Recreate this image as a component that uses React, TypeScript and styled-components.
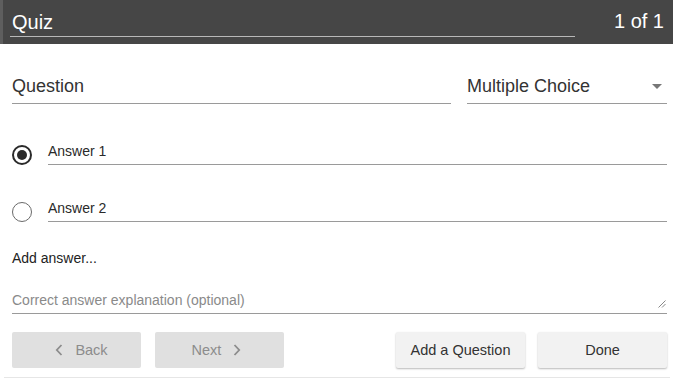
import React, { useState } from 'react'
import styled, { createGlobalStyle } from 'styled-components'

const GlobalStyle = createGlobalStyle`
  html, body {
    margin: 0;
    padding: 0;
    background: #ffffff;
    font-family: "Liberation Sans", Arial, Helvetica, sans-serif;
  }
`

const Page = styled.div`
  width: 673px;
  height: 378px;
  overflow: hidden;
  background: #fff;
`

const Header = styled.header`
  height: 44px;
  background: #464646;
  border-left: 3px solid #5e5e5e;
  display: flex;
  align-items: flex-start;
  padding: 0 9px 0 7px;
  color: #fff;
`

const TitleField = styled.div`
  width: 565px;
  margin-top: 10px;
  height: 27px;
  border-bottom: 1px solid #b8b8b8;
  padding-left: 2px;
  font-size: 20px;
  line-height: 24px;
  box-sizing: border-box;
`

const Counter = styled.div`
  margin-left: auto;
  margin-top: 9px;
  font-size: 20px;
  line-height: 24px;
`

const Body = styled.div`
  padding: 0 6px 0 12px;
`

const QuestionRow = styled.div`
  display: flex;
  gap: 16px;
  margin-top: 24px;
`

const UnderlineField = styled.div<{ $width?: number }>`
  position: relative;
  flex: ${p => (p.$width ? `0 0 ${p.$width}px` : '1')};
  height: 36px;
  box-sizing: border-box;
  border-bottom: 1px solid #9a9a9a;
  font-size: 18px;
  line-height: 36px;
  color: #333;
  display: flex;
  align-items: center;
`

const Caret = styled.span`
  position: absolute;
  right: 5px;
  top: 16px;
  width: 0;
  height: 0;
  border-left: 5px solid transparent;
  border-right: 5px solid transparent;
  border-top: 5px solid #777;
`

const AnswerList = styled.div`
  display: flex;
  flex-direction: column;
  gap: 30px;
  margin-top: 34px;
`

const AnswerRow = styled.div`
  display: flex;
  align-items: flex-start;
  gap: 16px;
`

const Radio = styled.span<{ $checked?: boolean }>`
  width: 20px;
  height: 20px;
  margin-top: 7px;
  box-sizing: border-box;
  border-radius: 50%;
  border: ${p => (p.$checked ? '2px solid #2a2a2a' : '1.5px solid #6a6a6a')};
  display: flex;
  align-items: center;
  justify-content: center;
  flex: 0 0 auto;
  &::after {
    content: '';
    display: ${p => (p.$checked ? 'block' : 'none')};
    width: 10px;
    height: 10px;
    border-radius: 50%;
    background: #2a2a2a;
  }
`

const AnswerField = styled.div`
  flex: 1;
  padding: 3px 0 3px;
  font-size: 14px;
  line-height: 20px;
  color: #2a2a2a;
  border-bottom: 1px solid #9a9a9a;
`

const AddAnswer = styled.div`
  margin-top: 26px;
  font-size: 14px;
  line-height: 20px;
  color: #222;
`

const Explanation = styled.div`
  position: relative;
  margin-top: 22px;
  padding-bottom: 3px;
  font-size: 14px;
  line-height: 20px;
  color: #8a8a8a;
  border-bottom: 1px solid #9a9a9a;
`

const Grip = styled.svg`
  position: absolute;
  right: 1px;
  bottom: 5px;
`

const ButtonBar = styled.div`
  display: flex;
  align-items: center;
  margin-top: 18px;
  padding-bottom: 9px;
`

const Group = styled.div<{ $gap: number }>`
  display: flex;
  gap: ${p => p.$gap}px;
`

const Spacer = styled.div`
  flex: 1;
`

const Button = styled.button<{ $disabled?: boolean; $shift?: number }>`
  width: 129px;
  height: 36px;
  border: none;
  border-radius: 2px;
  font-family: inherit;
  font-size: 14.5px;
  display: flex;
  align-items: center;
  justify-content: center;
  gap: 12px;
  background: ${p => (p.$disabled ? '#e0e0e0' : '#f2f2f2')};
  color: ${p => (p.$disabled ? '#8c8c8c' : '#333')};
  box-shadow: ${p => (p.$disabled ? 'none' : '0 1px 2px rgba(0,0,0,0.28)')};
  cursor: ${p => (p.$disabled ? 'default' : 'pointer')};
  padding: 0;
  padding-left: ${p => (p.$shift && p.$shift > 0 ? p.$shift : 0)}px;
  padding-right: ${p => (p.$shift && p.$shift < 0 ? -p.$shift : 0)}px;
`

const BottomLine = styled.div`
  margin-left: 4px;
  margin-right: 3px;
  border-top: 1px solid #e6e6e6;
`

const Chevron = ({ dir }: { dir: 'left' | 'right' }) => (
  <svg width="8" height="12" viewBox="0 0 8 12">
    <path
      d={dir === 'left' ? 'M6.5 1 L1.8 6 L6.5 11' : 'M1.5 1 L6.2 6 L1.5 11'}
      fill="none"
      stroke="#8c8c8c"
      strokeWidth="1.8"
    />
  </svg>
)

const App = () => {
  const [answers] = useState<{ text: string; correct: boolean }[]>([
    { text: 'Answer 1', correct: true },
    { text: 'Answer 2', correct: false },
  ])

  return (
    <>
      <GlobalStyle />
      <Page>
        <Header>
          <TitleField>Quiz</TitleField>
          <Counter>1 of 1</Counter>
        </Header>
        <Body>
          <QuestionRow>
            <UnderlineField>Question</UnderlineField>
            <UnderlineField $width={200}>
              Multiple Choice
              <Caret />
            </UnderlineField>
          </QuestionRow>

          <AnswerList>
            {answers.map(a => (
              <AnswerRow key={a.text}>
                <Radio $checked={a.correct} />
                <AnswerField>{a.text}</AnswerField>
              </AnswerRow>
            ))}
          </AnswerList>

          <AddAnswer>Add answer...</AddAnswer>

          <Explanation>
            Correct answer explanation (optional)
            <Grip width="8" height="8" viewBox="0 0 8 8">
              <path d="M7.5 0.5 L0.5 7.5 M7.5 4 L4 7.5" stroke="#888" strokeWidth="1" />
            </Grip>
          </Explanation>

          <ButtonBar>
            <Group $gap={14}>
              <Button $disabled $shift={10}>
                <Chevron dir="left" />
                Back
              </Button>
              <Button $disabled $shift={-6}>
                Next
                <Chevron dir="right" />
              </Button>
            </Group>
            <Spacer />
            <Group $gap={13}>
              <Button>Add a Question</Button>
              <Button>Done</Button>
            </Group>
          </ButtonBar>
        </Body>
        <BottomLine />
      </Page>
    </>
  )
}

export default App
